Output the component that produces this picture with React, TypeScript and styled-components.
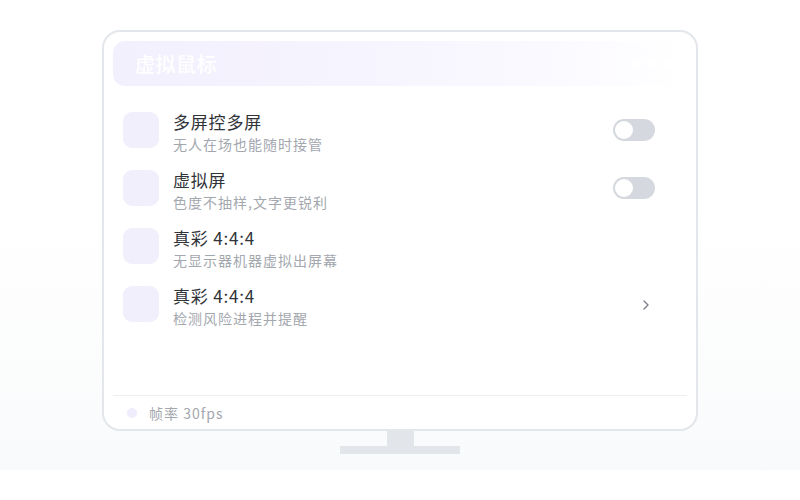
import React from "react";
import styled, { createGlobalStyle } from "styled-components";

const Global = createGlobalStyle`
  html, body { margin: 0; padding: 0; background: #ffffff; }
  body { font-family: "Noto Sans CJK SC", "Noto Sans", sans-serif; }
`;

const Page = styled.div`
  height: 470px;
  background: linear-gradient(180deg, #ffffff 0%, #ffffff 45%, #f9fafb 100%);
  display: flex;
  flex-direction: column;
  align-items: center;
  padding-top: 30px;
  box-sizing: border-box;
`;

const Monitor = styled.div`
  width: 596px;
  height: 401px;
  box-sizing: border-box;
  border: 2px solid #e3e6ea;
  border-radius: 18px;
  background: #ffffff;
  padding: 9px 9px 0 9px;
  display: flex;
  flex-direction: column;
`;

const Header = styled.div`
  height: 45px;
  border-radius: 12px;
  background: linear-gradient(90deg, #f3f0fe 0%, #f6f4fe 45%, #fdfcff 90%, #ffffff 100%);
  display: flex;
  align-items: center;
  justify-content: space-between;
  padding: 0 22px;
`;

const Title = styled.div`
  color: #ffffff;
  font-size: 20px;
  font-weight: 500;
  letter-spacing: 0.5px;
`;

const Dots = styled.div`
  display: flex;
  gap: 6px;
  margin-right: -6px;
`;

const Dot = styled.span`
  width: 9px;
  height: 9px;
  border-radius: 50%;
  background: #ffffff;
  opacity: 0.9;
`;

const List = styled.div`
  flex: 1;
  display: flex;
  flex-direction: column;
  padding-top: 15px;
`;

const Row = styled.div`
  height: 58px;
  display: flex;
  align-items: center;
  padding: 0 32px 0 10px;
`;

const IconBox = styled.div`
  width: 36px;
  height: 36px;
  border-radius: 9px;
  background: #f2effd;
  flex-shrink: 0;
`;

const Texts = styled.div`
  flex: 1;
  margin-left: 14px;
  display: flex;
  flex-direction: column;
  margin-top: 5px;
`;

const RowTitle = styled.div`
  font-size: 17px;
  line-height: 24px;
  letter-spacing: 0.8px;
  color: #303338;
`;

const RowSub = styled.div`
  font-size: 14px;
  line-height: 21px;
  letter-spacing: 1px;
  color: #a3a7ae;
`;

const Toggle = styled.div`
  width: 42px;
  height: 22px;
  border-radius: 11px;
  background: #d5d8de;
  position: relative;
  margin-top: -1px;
`;

const Knob = styled.div`
  position: absolute;
  left: 2px;
  top: 2px;
  width: 18px;
  height: 18px;
  border-radius: 50%;
  background: #ffffff;
`;

const Chevron = styled.div`
  width: 20px;
  display: flex;
  justify-content: center;
  margin-right: -1px;
  margin-top: 1px;
  color: #7d828b;
`;

const Footer = styled.div`
  height: 33px;
  border-top: 1px solid #eceef2;
  display: flex;
  align-items: center;
  padding-left: 14px;
`;

const StatusDot = styled.span`
  width: 10px;
  height: 10px;
  border-radius: 50%;
  background: #efecfd;
`;

const FooterText = styled.span`
  margin-left: 12px;
  font-size: 14px;
  letter-spacing: 1px;
  color: #a3a7ae;
`;

const Neck = styled.div`
  width: 27px;
  height: 15px;
  background: #e2e5e9;
`;

const Base = styled.div`
  width: 120px;
  height: 8px;
  background: #e2e5e9;
`;

type Item = { title: string; sub: string; action: "toggle" | "none" | "chevron" };

const items: Item[] = [
  { title: "多屏控多屏", sub: "无人在场也能随时接管", action: "toggle" },
  { title: "虚拟屏", sub: "色度不抽样,文字更锐利", action: "toggle" },
  { title: "真彩 4:4:4", sub: "无显示器机器虚拟出屏幕", action: "none" },
  { title: "真彩 4:4:4", sub: "检测风险进程并提醒", action: "chevron" },
];

export default function App() {
  return (
    <>
      <Global />
      <Page>
        <Monitor>
          <Header>
            <Title>虚拟鼠标</Title>
            <Dots>
              <Dot />
              <Dot />
              <Dot />
            </Dots>
          </Header>
          <List>
            {items.map((it, i) => (
              <Row key={i}>
                <IconBox />
                <Texts>
                  <RowTitle>{it.title}</RowTitle>
                  <RowSub>{it.sub}</RowSub>
                </Texts>
                {it.action === "toggle" && (
                  <Toggle>
                    <Knob />
                  </Toggle>
                )}
                {it.action === "chevron" && (
                  <Chevron>
                    <svg width="8" height="12" viewBox="0 0 8 12" fill="none">
                      <path d="M2 2 L6 6 L2 10" stroke="currentColor" strokeWidth="1.4" strokeLinecap="round" strokeLinejoin="round" />
                    </svg>
                  </Chevron>
                )}
              </Row>
            ))}
          </List>
          <Footer>
            <StatusDot />
            <FooterText>帧率 30fps</FooterText>
          </Footer>
        </Monitor>
        <Neck />
        <Base />
      </Page>
    </>
  );
}
